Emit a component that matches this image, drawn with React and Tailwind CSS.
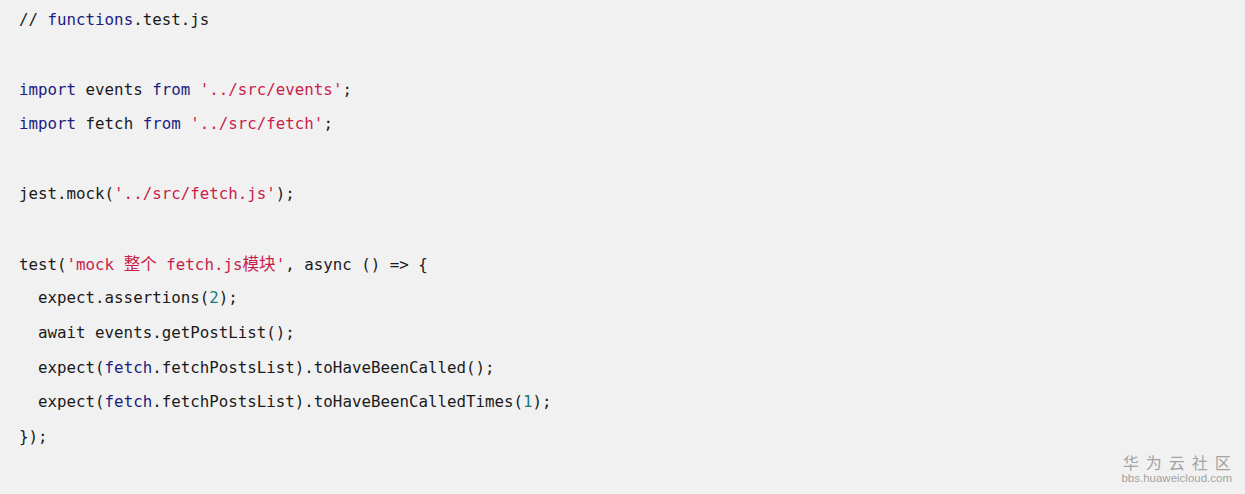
import React from "react";

const K = "text-[#1c1c80]"; // keyword navy
const S = "text-[#c81e4b]"; // string crimson
const N = "text-[#1b7a7a]"; // number teal
const P = "text-[#1a1a1a]"; // plain

function Cjk({ children, className }) {
  return (
    <span className={"text-[16.6px] " + (className || "")} style={{ fontFamily: '"Noto Sans CJK SC", sans-serif' }}>
      {children}
    </span>
  );
}

const lines = [
  [[P, "// "], [K, "functions"], [P, ".test.js"]],
  null,
  [[K, "import"], [P, " events "], [K, "from"], [P, " "], [S, "'../src/events'"], [P, ";"]],
  [[K, "import"], [P, " fetch "], [K, "from"], [P, " "], [S, "'../src/fetch'"], [P, ";"]],
  null,
  [[P, "jest.mock("], [S, "'../src/fetch.js'"], [P, ");"]],
  null,
  [
    [P, "test("],
    [S, "'mock "],
    ["cjk", "整个"],
    [S, " fetch.js"],
    ["cjk", "模块"],
    [S, "'"],
    [P, ", async () => {"],
  ],
  [[P, "  expect.assertions("], [N, "2"], [P, ");"]],
  [[P, "  await events.getPostList();"]],
  [[P, "  expect("], [K, "fetch"], [P, ".fetchPostsList).toHaveBeenCalled();"]],
  [[P, "  expect("], [K, "fetch"], [P, ".fetchPostsList).toHaveBeenCalledTimes("], [N, "1"], [P, ");"]],
  [[P, "});"]],
];

export default function App() {
  return (
    <div className="w-[1245px] h-[494px] bg-[#f1f1f1] relative overflow-hidden">
      <div
        className="pl-[19px] pt-[3px] text-[15.8px] leading-[34.75px] whitespace-pre"
        style={{ fontFamily: '"DejaVu Sans Mono", monospace' }}
      >
        {lines.map((line, i) => (
          <div key={i} className="h-[34.75px]">
            {line &&
              line.map(([c, t], j) =>
                c === "cjk" ? (
                  <Cjk key={j} className={S}>{t}</Cjk>
                ) : (
                  <span key={j} className={c}>{t}</span>
                )
              )}
          </div>
        ))}
      </div>
      <div className="absolute right-[13px] bottom-[9px] flex flex-col items-center text-[#a3a3a3]">
        <div
          className="text-[16px] leading-[20px] tracking-[7px] mr-[-7px]"
          style={{ fontFamily: '"Noto Sans CJK SC", sans-serif' }}
        >
          华为云社区
        </div>
        <div
          className="text-[11.5px] leading-[13px]"
          style={{ fontFamily: '"Liberation Sans", Arial, sans-serif' }}
        >
          bbs.huaweicloud.com
        </div>
      </div>
    </div>
  );
}
